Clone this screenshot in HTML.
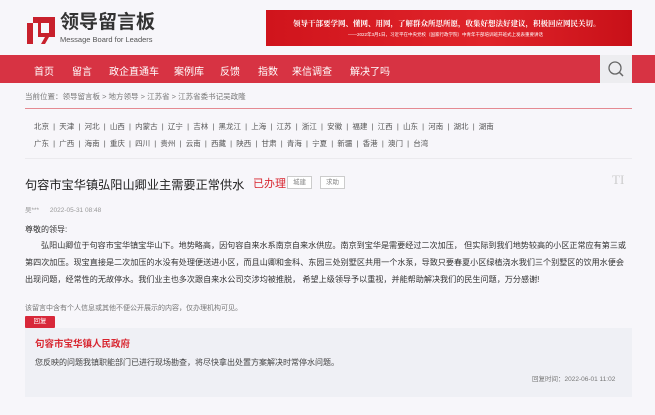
<!DOCTYPE html><html><head><meta charset="utf-8"><style>
*{margin:0;padding:0;box-sizing:border-box}
body{width:655px;height:415px;overflow:hidden;background:#f7f6fa;font-family:"Liberation Sans","Noto Sans CJK SC",sans-serif;color:#333;position:relative}
.a{position:absolute;white-space:nowrap}
.n{position:absolute;top:0}
</style></head><body>
<div class="a" style="left:27px;top:17px;width:28px;height:27px">
<svg width="28" height="27" viewBox="0 0 28 27"><path d="M6 0H28V20H22L18 27H14L18 20H11V6H6Z" fill="#c8202c"/><path d="M0 6H6V27H0Z" fill="#c8202c"/><rect x="14" y="6" width="8" height="10" fill="#f7f6fa"/></svg></div>
<div class="a" style="left:60px;top:13px;font-size:19px;line-height:20px;font-weight:bold;color:#333">领导留言板</div>
<div class="a" style="left:60px;top:35px;font-size:7.5px;line-height:9px;color:#555">Message Board for Leaders</div>
<div class="a" style="left:266px;top:10px;width:366px;height:36px;background:linear-gradient(90deg,#d0141c,#e0242a 60%,#c81018);color:#fff;overflow:hidden">
<div class="a" style="left:27px;top:8px;font-size:7.5px;font-weight:bold;font-family:'Noto Serif CJK SC',serif">领导干部要学网、懂网、用网，了解群众所思所愿，收集好想法好建议，积极回应网民关切。</div>
<div class="a" style="left:82px;top:22px;font-size:4.5px">——2022年3月1日，习近平在中央党校（国家行政学院）中青年干部培训班开班式上发表重要讲话</div></div>
<div class="a" style="left:0;top:55px;width:655px;height:28px;background:#d73343"></div>
<div class="a" style="left:600px;top:55px;width:32px;height:28px;background:#ededf0"><svg width="32" height="28"><circle cx="15" cy="13" r="6" fill="none" stroke="#666" stroke-width="1.3"/><path d="M19.5 17.5L23 21" stroke="#666" stroke-width="1.5"/></svg></div>
<div class="a" style="top:63px;left:0;font-size:10px;color:#fff">
<span class="n" style="left:34px">首页</span><span class="n" style="left:72px">留言</span><span class="n" style="left:109px">政企直通车</span><span class="n" style="left:174px">案例库</span><span class="n" style="left:220px">反馈</span><span class="n" style="left:258px">指数</span><span class="n" style="left:292px">来信调查</span><span class="n" style="left:350px">解决了吗</span></div>
<div class="a" style="left:25px;top:91px;font-size:7.5px;color:#777">当前位置：领导留言板 &gt; 地方领导 &gt; 江苏省 &gt; 江苏省委书记吴政隆</div>
<div class="a" style="left:25px;top:108px;width:607px;height:1px;background:#e58a92"></div>
<div class="a" style="left:34px;top:121px;font-size:7.5px;color:#555">北京 &nbsp;|&nbsp; 天津 &nbsp;|&nbsp; 河北 &nbsp;|&nbsp; 山西 &nbsp;|&nbsp; 内蒙古 &nbsp;|&nbsp; 辽宁 &nbsp;|&nbsp; 吉林 &nbsp;|&nbsp; 黑龙江 &nbsp;|&nbsp; 上海 &nbsp;|&nbsp; 江苏 &nbsp;|&nbsp; 浙江 &nbsp;|&nbsp; 安徽 &nbsp;|&nbsp; 福建 &nbsp;|&nbsp; 江西 &nbsp;|&nbsp; 山东 &nbsp;|&nbsp; 河南 &nbsp;|&nbsp; 湖北 &nbsp;|&nbsp; 湖南</div>
<div class="a" style="left:34px;top:138px;font-size:7.5px;color:#555">广东 &nbsp;|&nbsp; 广西 &nbsp;|&nbsp; 海南 &nbsp;|&nbsp; 重庆 &nbsp;|&nbsp; 四川 &nbsp;|&nbsp; 贵州 &nbsp;|&nbsp; 云南 &nbsp;|&nbsp; 西藏 &nbsp;|&nbsp; 陕西 &nbsp;|&nbsp; 甘肃 &nbsp;|&nbsp; 青海 &nbsp;|&nbsp; 宁夏 &nbsp;|&nbsp; 新疆 &nbsp;|&nbsp; 香港 &nbsp;|&nbsp; 澳门 &nbsp;|&nbsp; 台湾</div>
<div class="a" style="left:25px;top:158px;width:607px;height:1px;background:#ebeaee"></div>
<div class="a" style="left:25px;top:175px;font-size:12.2px;color:#222">句容市宝华镇弘阳山卿业主需要正常供水</div>
<div class="a" style="left:253px;top:175px;font-size:11px;color:#d8252f">已办理</div>
<div class="a" style="left:287px;top:176px;width:25px;height:13px;border:1px solid #ccc;font-size:6.5px;color:#888;text-align:center;line-height:11px;background:#fff">城建</div>
<div class="a" style="left:320px;top:176px;width:25px;height:13px;border:1px solid #ccc;font-size:6.5px;color:#888;text-align:center;line-height:11px;background:#fff">求助</div>
<div class="a" style="left:612px;top:172px;font-size:13px;color:#ccc;font-family:'Liberation Serif',serif">TI</div>
<div class="a" style="left:25px;top:204px;font-size:6.5px;color:#999">吴*** &nbsp;&nbsp;&nbsp;&nbsp; 2022-05-31 08:48</div>
<div class="a" style="left:25px;top:224px;font-size:8px;color:#333">尊敬的领导:</div>
<div class="a" style="left:41px;top:240px;font-size:8.1px;color:#333">弘阳山卿位于句容市宝华镇宝华山下。地势略高，因句容自来水系南京自来水供应。南京到宝华是需要经过二次加压， 但实际到我们地势较高的小区正常应有第三或</div>
<div class="a" style="left:25px;top:257px;font-size:8.1px;color:#333">第四次加压。现宝直接是二次加压的水没有处理便送进小区，而且山卿和金科、东园三处别墅区共用一个水泵，导致只要春夏小区绿植浇水我们三个别墅区的饮用水便会</div>
<div class="a" style="left:25px;top:274px;font-size:8.1px;color:#333">出现问题，经常性的无故停水。我们业主也多次跟自来水公司交涉均被推脱， 希望上级领导予以重视，并能帮助解决我们的民生问题，万分感谢!</div>
<div class="a" style="left:25px;top:303px;font-size:7px;color:#777">该留言中含有个人信息或其他不便公开展示的内容，仅办理机构可见。</div>
<div class="a" style="left:25px;top:316px;width:30px;height:12px;background:#d8283a;color:#fff;font-size:6.5px;text-align:center;line-height:12px;border-radius:1px">回复</div>
<div class="a" style="left:25px;top:328px;width:607px;height:69px;background:#eff0f5"></div>
<div class="a" style="left:35px;top:336px;font-size:9.5px;color:#d8252f;font-weight:bold">句容市宝华镇人民政府</div>
<div class="a" style="left:35px;top:357px;font-size:8px;color:#444">您反映的问题我镇职能部门已进行现场勘查，将尽快拿出处置方案解决时常停水问题。</div>
<div class="a" style="left:532px;top:373px;font-size:6.5px;color:#777">回复时间：2022-06-01 11:02</div>
</body></html>
